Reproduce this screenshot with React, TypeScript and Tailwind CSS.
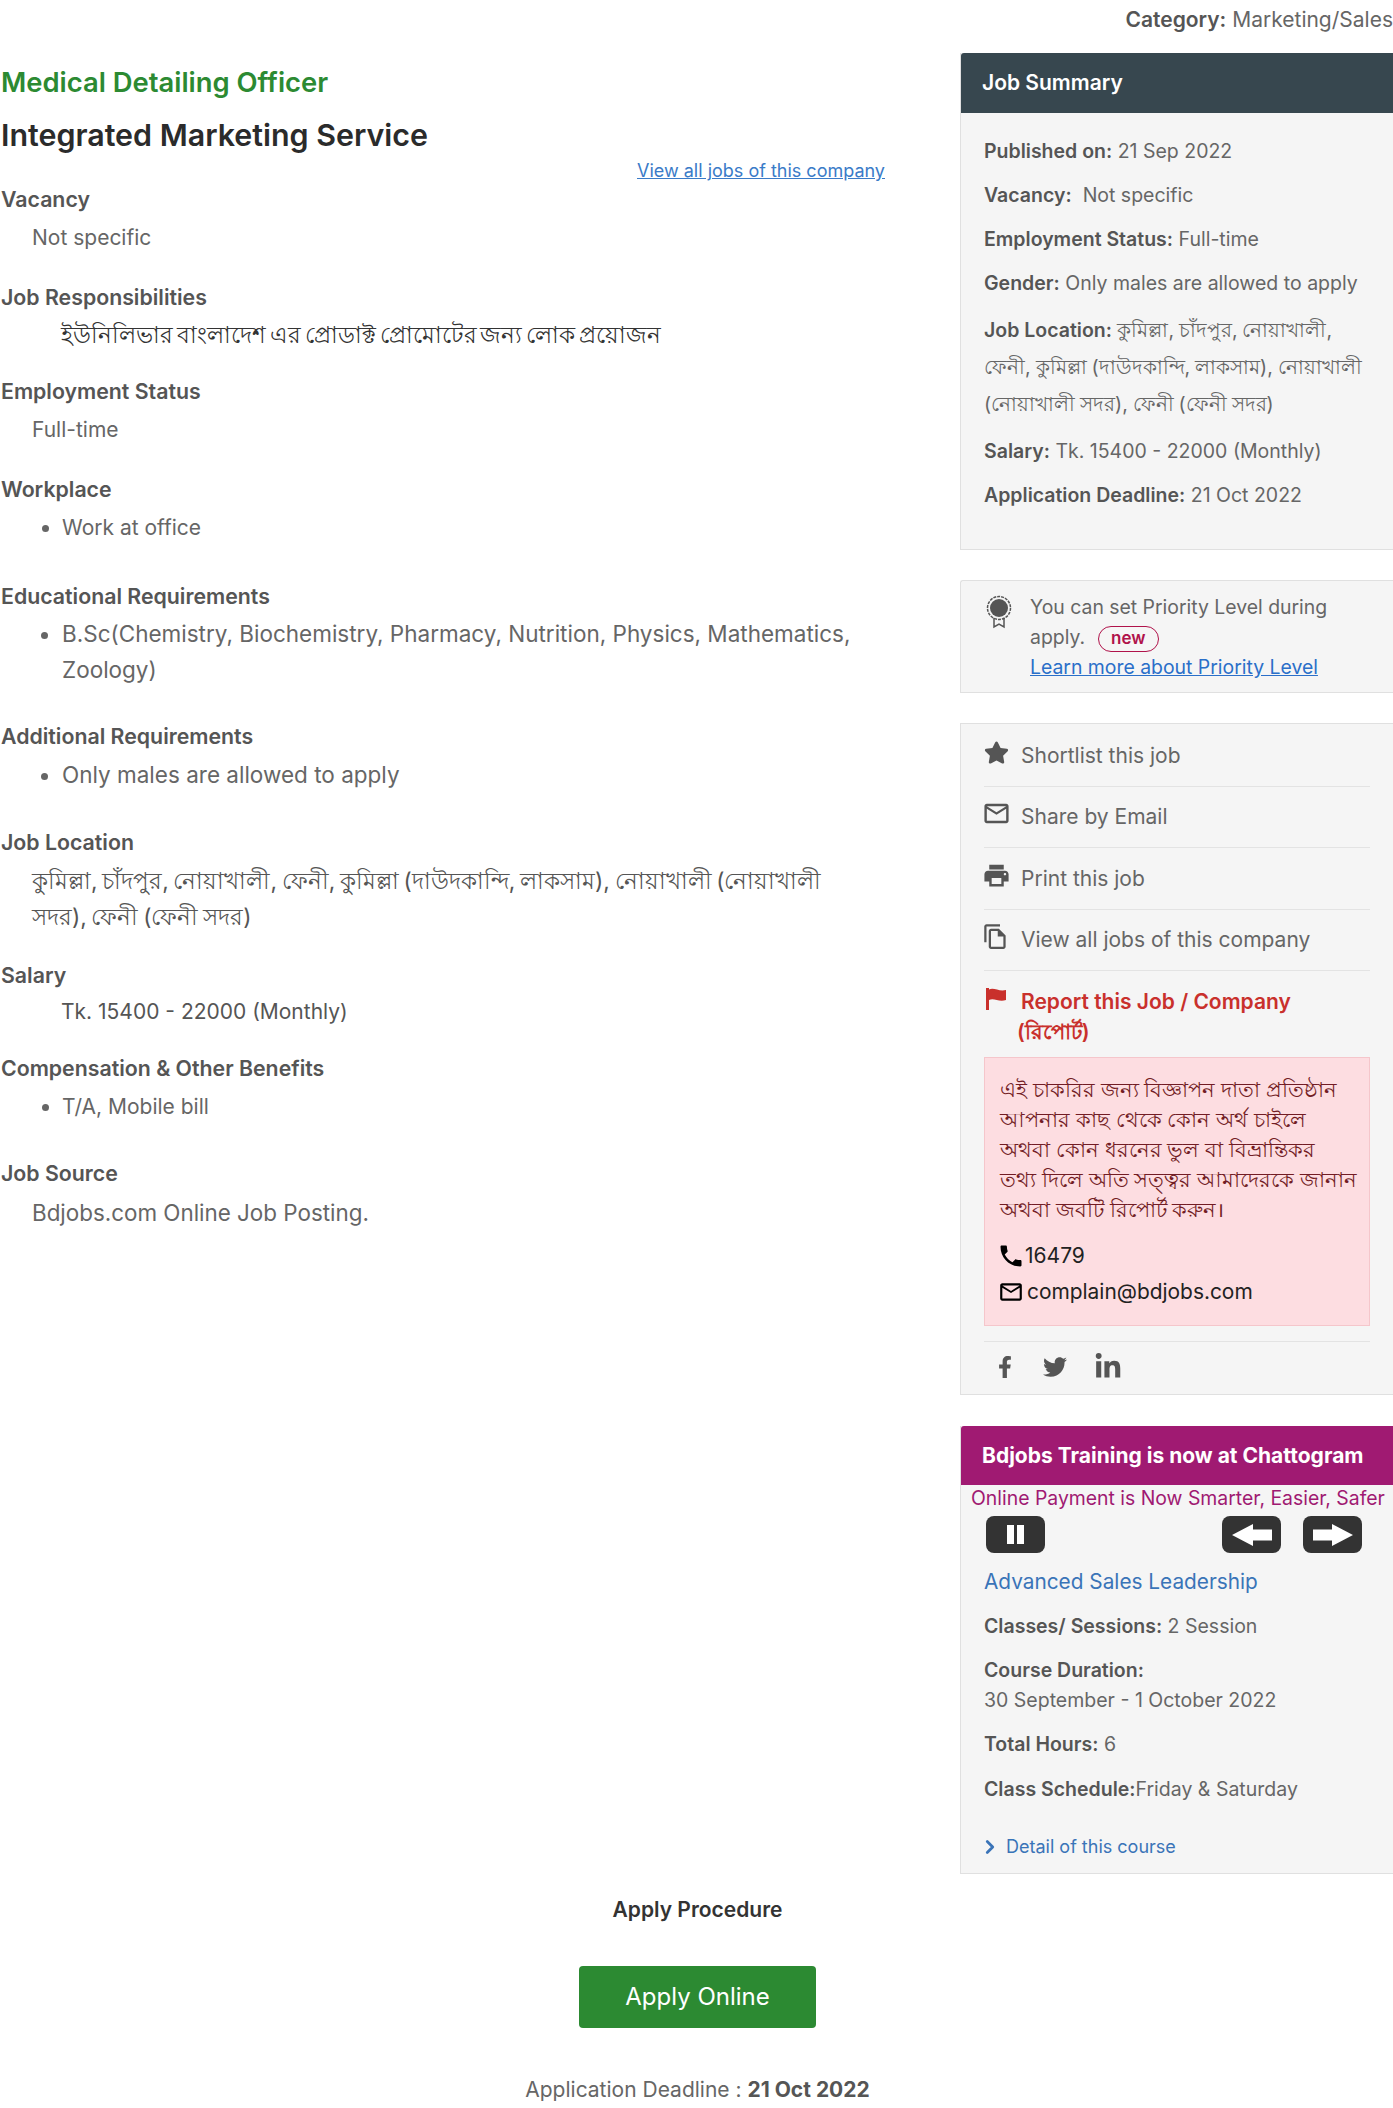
import { ChevronRight } from "lucide-react";
import { FaFacebookF, FaLinkedinIn, FaStar, FaTwitter } from "react-icons/fa";
import { MdLocalPrintshop, MdMailOutline, MdOutlineFileCopy, MdPhone } from "react-icons/md";

const location =
  "কুমিল্লা, চাঁদপুর, নোয়াখালী, ফেনী, কুমিল্লা (দাউদকান্দি, লাকসাম), নোয়াখালী (নোয়াখালী সদর), ফেনী (ফেনী সদর)";

function Heading({ children }: { children: React.ReactNode }) {
  return <h4 className="-translate-y-px text-[21.3px] leading-[24px] font-semibold text-[#555]">{children}</h4>;
}

function Bullet({ children, large }: { children: React.ReactNode; large?: boolean }) {
  return (
    <ul className={large ? "list-disc pl-[61px] text-[22.5px] leading-[36px] text-[#666]" : "list-disc pl-[61px] text-[21px] leading-[36px] text-[#666]"}>
      <li>{children}</li>
    </ul>
  );
}

function Row({ label, children }: { label: string; children: React.ReactNode }) {
  return (
    <p className="mb-[13px] leading-[31px] text-[#666]">
      <b className="font-semibold text-[#555]">{label}</b> {children}
    </p>
  );
}

function ActionRow({ icon, children }: { icon: React.ReactNode; children: React.ReactNode }) {
  return (
    <div className="flex h-[61.5px] items-center border-b border-[#e3e3e3] text-[21px] text-[#666]">
      <span className="-mt-[6px] w-[37px] text-[#555]">{icon}</span>
      <span>{children}</span>
    </div>
  );
}

function ArrowButton({ flip }: { flip?: boolean }) {
  return (
    <button className="flex h-[37px] w-[59px] items-center justify-center rounded-lg bg-[#333]">
      <svg viewBox="0 0 40 22" className={flip ? "h-[22px] w-[40px] rotate-180" : "h-[22px] w-[40px]"}>
        <path d="M0 11 21 0v5.5h19v11H21V22z" fill="#fff" />
      </svg>
    </button>
  );
}

export default function App() {
  return (
    <div className="h-[2108px] w-[1393px] overflow-hidden bg-white font-[Inter,'Noto_Sans',sans-serif] text-[19.5px]">
      <div className="flex">
        {/* Job details */}
        <main className="w-[885px] pl-[1px]">
          <h2 className="mt-[64px] text-[27.4px] leading-[36px] font-semibold text-[#2c8a32]">Medical Detailing Officer</h2>
          <h1 className="mt-[17px] text-[30.4px] leading-[36px] font-semibold text-[#2b2b2b]">Integrated Marketing Service</h1>
          <div className="mt-[3px] text-right">
            <a className="text-[18px] leading-[24px] text-[#3a7bc8] underline">View all jobs of this company</a>
          </div>

          <section className="mt-[3px]">
            <Heading>Vacancy</Heading>
            <p className="mt-[8px] pl-[31px] text-[21px] leading-[36px] text-[#666]">Not specific</p>
          </section>

          <section className="mt-[30px]">
            <Heading>Job Responsibilities</Heading>
            <p className="mt-[7px] pl-[60px] text-[22.7px] leading-[36px] [word-spacing:-2.5px] text-[#333]">ইউনিলিভার বাংলাদেশ এর প্রোডাক্ট প্রোমোটের জন্য লোক প্রয়োজন</p>
          </section>

          <section className="mt-[27px]">
            <Heading>Employment Status</Heading>
            <p className="mt-[8px] pl-[31px] text-[21px] leading-[36px] text-[#666]">Full-time</p>
          </section>

          <section className="mt-[30px]">
            <Heading>Workplace</Heading>
            <div className="mt-[8px]"><Bullet>Work at office</Bullet></div>
          </section>

          <section className="mt-[39px]">
            <Heading>Educational Requirements</Heading>
            <div className="mt-[7px] w-[860px]">
              <Bullet large>B.Sc(Chemistry, Biochemistry, Pharmacy, Nutrition, Physics, Mathematics, Zoology)</Bullet>
            </div>
          </section>

          <section className="mt-[37px]">
            <Heading>Additional Requirements</Heading>
            <div className="mt-[8px]"><Bullet large>Only males are allowed to apply</Bullet></div>
          </section>

          <section className="mt-[38px]">
            <Heading>Job Location</Heading>
            <p className="mt-[8px] w-[840px] pl-[31px] text-[22.7px] leading-[36px] [word-spacing:-1.7px] text-[#555]">{location}</p>
          </section>

          <section className="mt-[29px]">
            <Heading>Salary</Heading>
            <p className="mt-[6px] pl-[60px] text-[21px] leading-[36px] text-[#555]">Tk. 15400 - 22000 (Monthly)</p>
          </section>

          <section className="mt-[27px]">
            <Heading>Compensation &amp; Other Benefits</Heading>
            <div className="mt-[8px]"><Bullet>T/A, Mobile bill</Bullet></div>
          </section>

          <section className="mt-[37px]">
            <Heading>Job Source</Heading>
            <p className="mt-[9px] pl-[31px] text-[22.4px] leading-[36px] text-[#666]">Bdjobs.com Online Job Posting.</p>
          </section>
        </main>

        {/* Sidebar */}
        <aside className="ml-[75px] w-[433px] shrink-0">
          <p className="h-[53px] pt-[7px] text-right text-[21px] leading-[26px] whitespace-nowrap text-[#666]">
            <b className="font-semibold text-[#555]">Category:</b> Marketing/Sales
          </p>

          <section className="h-[497px] border-b border-l border-[#e0e0e0] bg-[#f5f5f5]">
            <h3 className="flex h-[60px] items-center rounded-tl-[3px] bg-[#37474f] pl-[21px] text-[21px] font-semibold text-white">Job Summary</h3>
            <div className="px-[23px] pt-[23px]">
              <Row label="Published on:">21 Sep 2022</Row>
              <Row label="Vacancy:">&nbsp;Not specific</Row>
              <Row label="Employment Status:">Full-time</Row>
              <Row label="Gender:">Only males are allowed to apply</Row>
              <p className="mb-[13px] leading-[37px] text-[#666]">
                <b className="font-semibold text-[#555]">Job Location:</b> <span className="text-[19.55px] [word-spacing:-0.6px]">{location}</span>
              </p>
              <Row label="Salary:">Tk. 15400 - 22000 (Monthly)</Row>
              <Row label="Application Deadline:">21 Oct 2022</Row>
            </div>
          </section>

          <section className="mt-[30px] flex h-[113px] rounded-tl-[3px] border-y border-l border-[#e0e0e0] bg-[#f5f5f5] pl-[24px] pt-[11px] text-[19.4px]">
            <svg viewBox="0 0 28 34" className="mt-[3px] h-[34px] w-[28px] shrink-0">
              <circle cx="14" cy="13" r="11.5" fill="none" stroke="#555" strokeWidth="1.5" strokeDasharray="3 1" />
              <circle cx="14" cy="13" r="9" fill="#555" />
              <path d="M9 23v9l5-3 5 3v-9" fill="none" stroke="#555" strokeWidth="1.5" />
            </svg>
            <div className="ml-[17px] leading-[30px] text-[#666]">
              <p>You can set Priority Level during</p>
              <p>
                apply.
                <span className="ml-[13px] inline-block h-[26px] rounded-full border border-[#b0124a] px-[12px] align-middle text-[17px] leading-[23px] font-semibold text-[#b0124a]">new</span>
              </p>
              <a className="text-[#2a6fc9] underline">Learn more about Priority Level</a>
            </div>
          </section>

          <section className="mt-[30px] h-[672px] border-y border-l border-[#e0e0e0] bg-[#f5f5f5] pt-[1px] pl-[23px] pr-[23px]">
            <ActionRow icon={<FaStar className="text-[25px]" />}>Shortlist this job</ActionRow>
            <ActionRow icon={<MdMailOutline className="-ml-[2px] text-[29px]" />}>Share by Email</ActionRow>
            <ActionRow icon={<MdLocalPrintshop className="-ml-[2px] text-[29px]" />}>Print this job</ActionRow>
            <ActionRow icon={<MdOutlineFileCopy className="-ml-[2px] text-[27px]" />}>View all jobs of this company</ActionRow>
            <div className="pt-[16px] text-[21px] font-semibold text-[#c9302c]">
              <div className="flex leading-[30px]">
                <svg viewBox="0 0 22 24" className="mr-[14px] ml-[1px] h-[24px] w-[22px] shrink-0" fill="currentColor">
                  <path d="M1 1h3v1.5c5-2.5 10 2.5 17 0.5v10c-7 2.5-12-2.5-17 0V23H1z" />
                </svg>
                <span>Report this Job / Company</span>
              </div>
              <p className="pl-[33px] leading-[30px]">(রিপোর্ট)</p>
            </div>
            <div className="mt-[10px] border border-[#f5c6cb] bg-[#fddde1] pt-[17px] pb-[15px] pl-[15px]">
              <p className="text-[20.5px] leading-[30px] whitespace-nowrap text-[#721c24]">
                এই চাকরির জন্য বিজ্ঞাপন দাতা প্রতিষ্ঠান<br />
                আপনার কাছ থেকে কোন অর্থ চাইলে<br />
                অথবা কোন ধরনের ভুল বা বিভ্রান্তিকর<br />
                তথ্য দিলে অতি সত্ত্বর আমাদেরকে জানান<br />
                অথবা জবটি রিপোর্ট করুন।
              </p>
              <p className="mt-[13px] flex items-center text-[21px] leading-[36px] text-[#222]">
                <MdPhone className="-ml-[3px] text-[28px] text-black" />16479
              </p>
              <p className="flex items-center text-[20.9px] leading-[36px] text-[#222]">
                <MdMailOutline className="-ml-[2px] mr-[3px] text-[26px] text-black" />complain@bdjobs.com
              </p>
            </div>
            <div className="mt-[15px] flex h-[50px] items-center gap-[27px] border-t border-[#e3e3e3] pl-[10px] text-[#555]">
              <FaFacebookF className="text-[22px]" />
              <FaTwitter className="text-[24px]" />
              <FaLinkedinIn className="text-[28px]" />
            </div>
          </section>

          <section className="mt-[31px] h-[448px] border-b border-l border-[#e0e0e0] bg-[#f5f5f5]">
            <h3 className="flex h-[59px] items-center rounded-tl-[3px] bg-[#a01a72] pl-[21px] text-[21px] font-bold whitespace-nowrap text-white">Bdjobs Training is now at Chattogram</h3>
            <p className="pl-[10px] text-[19.4px] leading-[27px] whitespace-nowrap text-[#a01a72]">Online Payment is Now Smarter, Easier, Safer</p>
            <div className="mt-[4px] flex pl-[25px]">
              <button className="flex h-[37px] w-[59px] items-center justify-center gap-[3px] rounded-lg bg-[#333]">
                <i className="h-[19px] w-[7px] bg-white" />
                <i className="h-[19px] w-[7px] bg-white" />
              </button>
              <div className="ml-[177px] flex gap-[22px]">
                <ArrowButton />
                <ArrowButton flip />
              </div>
            </div>
            <div className="px-[23px]">
              <a className="mt-[14px] block text-[20.8px] leading-[30px] text-[#3a74b8]">Advanced Sales Leadership</a>
              <p className="mt-[14px] leading-[30px] text-[#666]"><b className="font-semibold text-[#555]">Classes/ Sessions:</b> 2 Session</p>
              <p className="mt-[14px] leading-[30px] font-semibold text-[#555]">Course Duration:</p>
              <p className="leading-[30px] text-[#666]">30 September - 1 October 2022</p>
              <p className="mt-[14px] leading-[30px] text-[#666]"><b className="font-semibold text-[#555]">Total Hours:</b> 6</p>
              <p className="mt-[15px] leading-[30px] text-[#666]"><b className="font-semibold text-[#555]">Class Schedule:</b>Friday &amp; Saturday</p>
              <a className="mt-[28px] flex items-center text-[18px] leading-[30px] text-[#3a74b8]">
                <ChevronRight strokeWidth={3} className="mr-[5px] ml-[-5px] h-[22px] w-[22px]" />Detail of this course
              </a>
            </div>
          </section>
        </aside>
      </div>

      {/* Apply */}
      <div className="pl-[2px] text-center">
        <p className="mt-[23px] text-[21px] leading-[26px] font-semibold text-[#333]">Apply Procedure</p>
        <a className="mx-auto mt-[43px] flex h-[62px] w-[237px] items-center justify-center rounded bg-[#2c8a32] text-[24px] text-white">Apply Online</a>
        <p className="mt-[49px] text-[21px] leading-[26px] text-[#666]">Application Deadline : <b className="font-bold text-[#555]">21 Oct 2022</b></p>
      </div>
    </div>
  );
}
